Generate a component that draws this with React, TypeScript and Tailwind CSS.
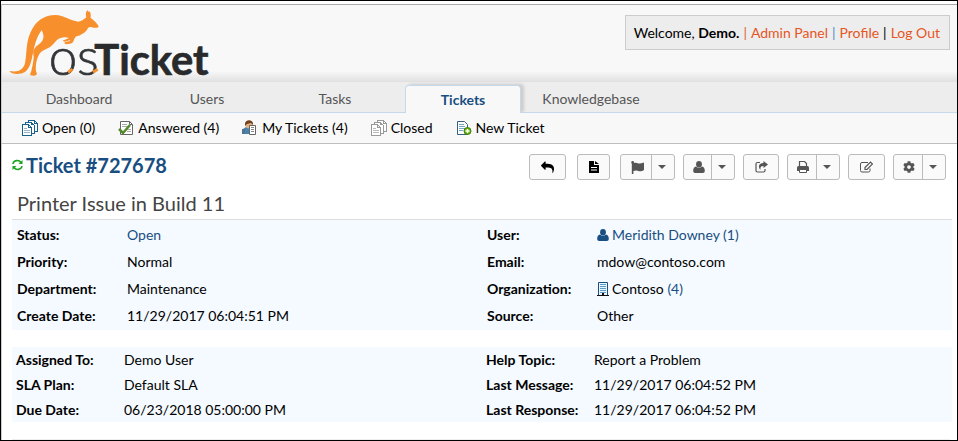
import type { ReactNode } from 'react';
import { FaCog, FaFlag } from 'react-icons/fa';

function Logo() {
  return (
    <svg width="206" height="78" viewBox="0 0 618 234" role="img" aria-label="osTicket">
      <path
        fill="#f7902c"
        d="M1 183C28 188 42 180 48 160C54 132 50 100 64 68C80 32 106 15 140 15C164 16 184 32 208 35C219 34 224 28 232 22C230 14 230 4 236 1L239 6C243 2 246 8 245 24C256 32 266 42 269 49C268 54 262 54 254 53C246 51 241 50 237 54C230 68 216 76 200 80L196 86C194 94 190 102 182 101L172 103C166 102 164 98 168 97L182 93L184 90L168 95C162 95 160 90 166 90L180 84C166 80 154 82 144 90C136 98 130 106 122 112C104 121 96 124 90 134C80 152 80 172 81 184L84 192C80 198 74 198 64 196C62 190 68 186 68 178C72 160 74 150 74 140C70 122 76 112 88 104C104 94 108 80 98 61C80 84 76 112 70 138C66 162 58 184 40 190C24 194 6 192 1 183Z"
      />
      <text x="119" y="195" fill="#333638" stroke="#333638" strokeWidth="2" fontSize="153" className="font-[Lato] font-light">os</text>
      <text x="256" y="195" fill="#282a2b" stroke="#282a2b" strokeWidth="2" fontSize="125" fontWeight="700" fontFamily="Lato, sans-serif">Ticket</text>
      <path d="M177 187l14-9M252 187l14-9" stroke="#f7902c" strokeWidth="9" />
    </svg>
  );
}

function Pages({ edge, fold }: { edge: string; fold: string }) {
  return (
    <svg width="16" height="16" viewBox="0 0 16 16" shapeRendering="crispEdges" fill="#fff">
      <path d="M6.500 .5h6l3 3v8h-9z" stroke={edge} />
      <path d="M3.500 2.500h6l3 3v8h-9z" stroke={edge} />
      <path d="M.5 4.500h6l3 3v8h-9z" stroke={edge} />
      <path d="M6.500 4.500v3h3M9.500 2.500v2h2M12.500 .5v3h3" fill="none" stroke={edge} />
      <path d="M2 8.500h3M2 10.500h6M2 12.500h6" stroke={fold} />
    </svg>
  );
}

function AnsweredIcon() {
  return (
    <svg width="16" height="16" viewBox="0 0 16 16">
      <path d="M2.500 1.500h9l3 3v10h-12z" fill="#fff" stroke="#666" />
      <path d="M11.500 1.500v3h3" fill="none" stroke="#666" />
      <path d="M4 4.500h5M4 6.500h8M9 9.500h4M9 11.500h4" stroke="#aaa" />
      <path d="M1 9l4 4 7-8" fill="none" stroke="#538a2b" strokeWidth="2.500" />
    </svg>
  );
}

function MyTicketsIcon() {
  return (
    <svg width="16" height="16" viewBox="0 0 16 16">
      <path d="M1 14V9l3-2h5l2 2v5z" fill="#4384b5" />
      <circle cx="7" cy="5" r="3.500" fill="#e7b080" />
      <path d="M3 4c0-5 9-5 8 1L9 3 5 4 3 6z" fill="#71411d" />
      <path d="M7.500 5.500h6v9h-6z" fill="#fff" stroke="#666" />
      <path d="M9 7.500h3M9 9.500h3M9 11.500h3" stroke="#888" />
      <path d="M0 9h3v5H0z" fill="#55738b" />
    </svg>
  );
}

function NewTicketIcon() {
  return (
    <svg width="16" height="16" viewBox="0 0 16 16">
      <path d="M1.500 1.500h7l3 3v10h-10z" fill="#fff" stroke="#39607d" />
      <path d="M3 4.500h5M3 6.500h6M3 8.500h6M3 10.500h4" stroke="#75a6c5" />
      <circle cx="11.500" cy="11" r="3.500" fill="#65b50b" stroke="#3e8005" />
      <path d="M9.500 11h4M11.500 9v4" stroke="#fff" strokeWidth="1.500" />
    </svg>
  );
}

function RefreshIcon() {
  return (
    <svg width="11" height="12" viewBox="0 0 11 12" fill="none" stroke="#1ca322" strokeWidth="1.600">
      <path d="M1 5c.5-4 6-4.500 8-1.500M10 7c-.5 4-6 4.500-8 1.500" />
      <path d="M10.500 1v4h-4zM.5 11V7h4z" fill="#1ca322" stroke="none" />
    </svg>
  );
}

function ReplyIcon() {
  return (
    <svg width="13" height="13" viewBox="0 0 1792 1792" fill="currentColor">
      <path d="M1792 1120q0 166-127 451-3 7-10.500 24t-13.500 30-13 22q-12 17-28 17-15 0-23.500-10t-8.500-25q0-9 2.500-26.500t2.500-23.500q5-68 5-123 0-101-17.500-181t-48.500-138.500-80-101-105.500-69.500-133-42.500-154-21.500-175.500-6h-224v256q0 26-19 45t-45 19-45-19l-512-512q-19-19-19-45t19-45l512-512q19-19 45-19t45 19 19 45v256h224q713 0 875 403 53 134 53 333z" />
    </svg>
  );
}

function FileIcon() {
  return (
    <svg width="10" height="12" viewBox="0 0 10 12">
      <path d="M0 0h5v4h5v8H0zM6 0l4 3H6z" fill="currentColor" />
      <path d="M2 6.500h6M2 9h6" stroke="#fff" />
    </svg>
  );
}

function PersonIcon() {
  return (
    <svg width="12" height="12" viewBox="0 0 12 12" fill="currentColor">
      <ellipse cx="6" cy="3.200" rx="2.900" ry="3.200" />
      <path d="M3 5.500c2 1.800 4 1.800 6 0 2 .3 2.800 2 2.800 4.500 0 1.300-.8 2-2 2H2.200c-1.200 0-2-.7-2-2C.2 7.500 1 5.800 3 5.500z" />
    </svg>
  );
}

function ShareIcon() {
  return (
    <svg width="13" height="12" viewBox="0 0 13 12">
      <path d="M5 1.500H2.500q-1.500 0-1.500 1.500v6.500q0 1.500 1.500 1.500h6q1.500 0 1.500-1.500V8" fill="none" stroke="currentColor" strokeWidth="1.200" />
      <path d="M8.500 0L13 3.500 8.500 7V5C6 5 5 6 5.500 9 2.500 5.500 4 2 8.500 2z" fill="currentColor" />
    </svg>
  );
}

function PrintIcon() {
  return (
    <svg width="12" height="12" viewBox="0 0 12 12">
      <path d="M2.500 5.500v-5h5l2 2v3" fill="none" stroke="currentColor" strokeWidth="1.200" />
      <path d="M0 6.500Q0 5 1.500 5h9Q12 5 12 6.500V10H0z" fill="currentColor" />
      <path d="M2.500 8.500h7v3h-7z" fill="#fff" stroke="currentColor" />
    </svg>
  );
}

function EditIcon() {
  return (
    <svg width="13" height="12" viewBox="0 0 13 12">
      <path d="M8 1.500H2Q.5 1.500 .5 3v6.500Q.5 11 2 11h6.500q1.500 0 1.500-1.500V7.500" fill="none" stroke="currentColor" />
      <path d="M5 6.500L10.500 1l2 2L7 8.500H5z" fill="none" stroke="currentColor" strokeWidth="1.200" />
    </svg>
  );
}

function BuildingIcon() {
  return (
    <svg width="12" height="14" viewBox="0 0 12 14">
      <path d="M1.500 .5h9v13h-9z" fill="#e9f5ff" stroke="#184e81" />
      <path d="M3 2.500h6M3 4.500h6M3 6.500h6M3 8.500h6M3 10.500h6" stroke="#5b9bc8" />
      <path d="M5 11h2v2.500H5zM0 13h12v1H0z" fill="#111" />
    </svg>
  );
}

const tabs = ['Dashboard', 'Users', 'Tasks', 'Tickets', 'Knowledgebase'];

const queues: { label: string; icon: ReactNode }[] = [
  { label: 'Open (0)', icon: <Pages edge="#17608a" fold="#9bb6c6" /> },
  { label: 'Answered (4)', icon: <AnsweredIcon /> },
  { label: 'My Tickets (4)', icon: <MyTicketsIcon /> },
  { label: 'Closed', icon: <Pages edge="#999" fold="#bbb" /> },
  { label: 'New Ticket', icon: <NewTicketIcon /> },
];

const actionStyle = 'flex h-[26px] items-center justify-center rounded-[3px] border border-[#bbb] bg-[#fafafa]';

function Action({ label, width, children }: { label: string; width: string; children: ReactNode }) {
  return (
    <button type="button" aria-label={label} className={`${actionStyle} ${width}`}>
      {children}
    </button>
  );
}

function SplitAction({ label, width, children }: { label: string; width: string; children: ReactNode }) {
  return (
    <div className={`${actionStyle} text-[#555] ${width}`}>
      <button type="button" aria-label={label} className="flex h-full flex-1 items-center justify-center pl-0.5">
        {children}
      </button>
      <button type="button" aria-label={`${label} options`} className="flex h-full w-[23px] items-center justify-center border-l border-[#bbb] pr-0.5">
        <svg width="8" height="4" viewBox="0 0 8 4"><path d="M0 0h8L4 4z" fill="currentColor" /></svg>
      </button>
    </div>
  );
}

type Row = [string, ReactNode];

function Details({ rows, compact = false }: { rows: Row[]; compact?: boolean }) {
  return (
    <table className="w-full table-fixed text-left">
      <tbody>
        {rows.map(([name, value]) => (
          <tr key={name} className={compact ? 'h-[25px]' : 'h-[27px]'}>
            <th scope="row" className={compact ? 'w-28 pl-1 font-bold' : 'w-[115px] pl-[5px] font-bold'}>{name}</th>
            <td>{value}</td>
          </tr>
        ))}
      </tbody>
    </table>
  );
}

const link = 'text-[#184e81]';

export default function App() {
  return (
    <div className="min-h-screen border border-black bg-white pt-[3px] font-[Lato,sans-serif] text-sm text-black">
      <div className="border-l border-[#ccc]">
        <header className="flex h-[78px] items-start justify-between border-t border-[#aaa] bg-[linear-gradient(#f8f8f8_0,#f8f8f8_66px,#dedede_78px)] pr-[7px] pl-[7px]">
          <a href="#home" className="mt-[5px] block"><Logo /></a>
          <p className="mt-2.5 flex h-[35px] items-center gap-1 border border-[#ccc] bg-[#ededed] pr-[9px] pl-2 whitespace-nowrap">
            <span>Welcome, <strong>Demo.</strong></span>
            <span className="text-[#d9652f]">|</span>
            <a href="#admin" className="text-[#e65524]">Admin Panel</a>
            <span className="text-[#4a8fc7]">|</span>
            <a href="#profile" className="text-[#e65524]">Profile</a>
            <span>|</span>
            <a href="#logout" className="text-[#e65524]">Log Out</a>
          </p>
        </header>

        <nav aria-label="Main" className="relative flex h-[31px] items-end gap-3 border-b border-[#c5d9ec] bg-[#ededed] pl-[19px]">
          {tabs.map((tab) => (
            <a
              key={tab}
              href={`#${tab.toLowerCase()}`}
              className={
                tab === 'Tickets'
                  ? '-mb-px flex h-7 w-[116px] items-center justify-center rounded-t border border-b-0 border-[#c5d9ec] bg-[#f8f8f8] font-bold text-[#184e81] shadow-[3px_-1px_3px_#ccc]'
                  : 'flex h-[26px] w-[116px] items-center justify-center text-[#555]'
              }
            >
              {tab}
            </a>
          ))}
        </nav>

        <nav aria-label="Ticket queues" className="relative flex h-[31px] items-center gap-[23px] border-b border-[#bebebe] bg-[#f8f8f8] pl-5">
          {queues.map(({ label, icon }) => (
            <a key={label} href={`#${label}`} className="flex items-center gap-1">
              {icon}
              {label}
            </a>
          ))}
        </nav>

        <main className="pr-[5px] pl-2.5">
          <div className="flex h-[42px] items-start justify-between pr-1.5">
            <h1 className="pt-[7px] text-xl font-bold text-[#184e81]">
              <a href="#ticket" className="flex items-center gap-[3px]"><RefreshIcon />Ticket #727678</a>
            </h1>
            <div className="flex gap-2 pt-2.5">
              <Action label="Reply" width="w-[37px] mr-[3px]"><ReplyIcon /></Action>
              <Action label="Note" width="w-[33px] mr-0.5"><FileIcon /></Action>
              <SplitAction label="Status" width="w-[55px]"><FaFlag size={13} /></SplitAction>
              <SplitAction label="Assign" width="w-[52px]"><PersonIcon /></SplitAction>
              <Action label="Transfer" width="w-9 text-[#555]"><ShareIcon /></Action>
              <SplitAction label="Print" width="w-[53px]"><PrintIcon /></SplitAction>
              <Action label="Edit" width="w-[37px] text-[#555]"><EditIcon /></Action>
              <SplitAction label="More" width="w-[53px]"><FaCog size={12} /></SplitAction>
            </div>
          </div>

          <h2 className="h-[33px] pt-[3px] pl-[5px] text-xl text-[#444]">Printer Issue in Build 11</h2>

          <section className="grid grid-cols-2 border-t border-[#ddd] bg-[#f4faff] py-px">
            <Details
              rows={[
                ['Status:', <a href="#status" className={link}>Open</a>],
                ['Priority:', 'Normal'],
                ['Department:', 'Maintenance'],
                ['Create Date:', '11/29/2017 06:04:51 PM'],
              ]}
            />
            <Details
              rows={[
                ['User:', <a href="#user" className={`flex items-center gap-[3px] ${link}`}><PersonIcon />Meridith Downey (1)</a>],
                ['Email:', 'mdow@contoso.com'],
                ['Organization:', <span className="flex items-center gap-[3px]"><BuildingIcon /><span>Contoso <a href="#organization" className={link}>(4)</a></span></span>],
                ['Source:', 'Other'],
              ]}
            />
          </section>

          <section className="mt-[17px] grid grid-cols-2 bg-[#f4faff]">
            <Details
              compact
              rows={[
                ['Assigned To:', 'Demo User'],
                ['SLA Plan:', 'Default SLA'],
                ['Due Date:', '06/23/2018 05:00:00 PM'],
              ]}
            />
            <Details
              compact
              rows={[
                ['Help Topic:', 'Report a Problem'],
                ['Last Message:', '11/29/2017 06:04:52 PM'],
                ['Last Response:', '11/29/2017 06:04:52 PM'],
              ]}
            />
          </section>
          <hr className="mt-[17px] mr-0.5 border-[#eee]" />
        </main>
      </div>
    </div>
  );
}
